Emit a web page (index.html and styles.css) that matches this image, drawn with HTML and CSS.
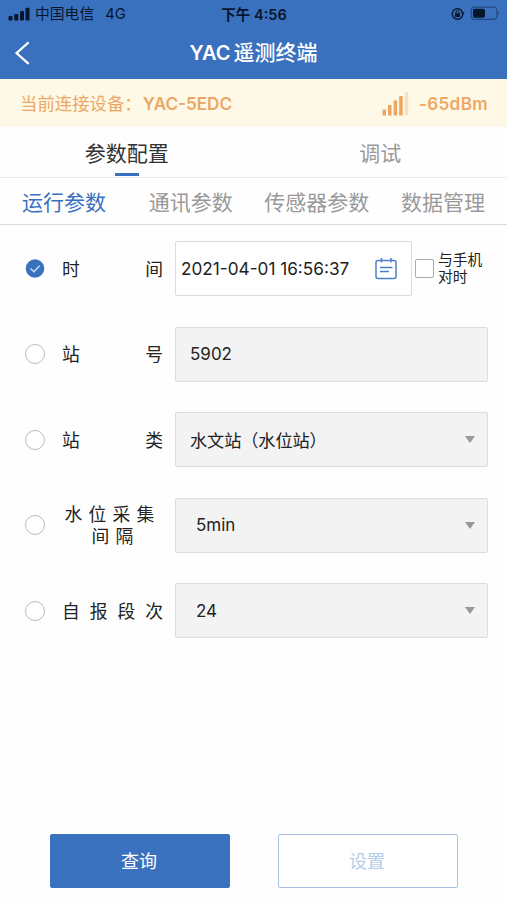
FILE: index.html
```
<!DOCTYPE html>
<html lang="zh-CN">
<head>
<meta charset="utf-8">
<title>YAC遥测终端</title>
<link rel="stylesheet" href="styles.css">
</head>
<body>
<header class="top">
  <div class="status">
    <div class="carrier">
      <svg width="22" height="14" viewBox="0 0 22 14"><rect x="0.5" y="9" width="4" height="4.5" rx="1.2"/><rect x="6.3" y="7" width="4" height="6.5" rx="1.2"/><rect x="12" y="4" width="4" height="9.5" rx="1.2"/><rect x="17.5" y="0.8" width="4" height="12.7" rx="1.2"/></svg>
      <span class="operator">中国电信</span><span class="net">4G</span>
    </div>
    <div class="clock">下午 4:56</div>
    <div class="power">
      <svg width="50" height="16" viewBox="0 0 50 16"><circle cx="7.5" cy="8" r="5.2" fill="none" stroke="#07162c" stroke-width="1.4"/><path d="M11.5 6.5h3.2l-1.7 2.6z"/><rect x="5" y="7.2" width="5" height="3.7" rx=".5"/><path d="M6 7.5V6.3a1.5 1.5 0 0 1 3 0v1.2" fill="none" stroke="#07162c"/><rect x="21.3" y="1.1" width="25.5" height="12.3" rx="3.4" fill="none" stroke="#234a80" stroke-width="1.2"/><rect x="23" y="2.8" width="12" height="9" rx="1.8"/><path d="M48 5q2 2.3 0 4.6z" fill="#234a80"/></svg>
    </div>
  </div>
  <div class="titlebar">
    <svg class="back" width="16" height="24" viewBox="0 0 16 24"><path d="M13.7 1.2L1.5 12.2l12.2 10.6" fill="none" stroke="#fff" stroke-width="2.2"/></svg>
    <h1><span class="latin">YAC</span>遥测终端</h1>
  </div>
</header>
<section class="device">
  <div class="device-name"><span class="device-label">当前连接设备：</span><b>YAC-5EDC</b></div>
  <div class="signal">
    <svg width="27" height="24" viewBox="0 0 27 24"><g fill="#eda765"><rect x="0.5" y="17.5" width="3.5" height="6"/><rect x="6" y="13" width="3.5" height="10.5"/><rect x="11.6" y="8.5" width="3.5" height="15"/><rect x="17.2" y="4" width="3.5" height="19.5"/></g><rect x="22.8" y="0.3" width="3.4" height="23.2" fill="#fae0c0"/></svg>
    <b>-65dBm</b>
  </div>
</section>
<nav class="main-tabs">
  <div class="tab active">参数配置</div>
  <div class="tab">调试</div>
</nav>
<nav class="sub-tabs">
  <span class="active">运行参数</span><span>通讯参数</span><span>传感器参数</span><span>数据管理</span>
</nav>
<main class="form">
  <div class="row">
    <svg class="radio" width="20" height="20" viewBox="0 0 20 20"><circle cx="10" cy="9.5" r="9.3" fill="#3a71be"/><path d="M5.5 9.5l3.4 3.2 5.8-6" fill="none" stroke="#c8dcf5" stroke-width="1.5"/></svg>
    <div class="label"><span>时</span><span>间</span></div>
    <div class="field date"><span>2021-04-01 16:56:37</span>
      <svg width="22" height="22" viewBox="0 0 22 22" fill="none" stroke="#4d80ca" stroke-width="1.5"><rect x="1" y="2.5" width="20" height="18" rx="2"/><path d="M6.5 0v4.5M16 0v4.5M5 9.4h12.5M5 13.6h9"/></svg>
    </div>
    <div class="check"></div>
    <div class="sync"><div>与手机</div><div>对时</div></div>
  </div>
  <div class="row">
    <div class="radio off"></div>
    <div class="label"><span>站</span><span>号</span></div>
    <div class="field gray"><span>5902</span></div>
  </div>
  <div class="row">
    <div class="radio off"></div>
    <div class="label"><span>站</span><span>类</span></div>
    <div class="field gray"><span class="cjk">水文站（水位站）</span><i class="arrow"></i></div>
  </div>
  <div class="row">
    <div class="radio off"></div>
    <div class="label two"><div>水位采集</div><div class="second">间隔</div></div>
    <div class="field gray inset"><span>5min</span><i class="arrow"></i></div>
  </div>
  <div class="row">
    <div class="radio off"></div>
    <div class="label"><span>自</span><span>报</span><span>段</span><span>次</span></div>
    <div class="field gray inset"><span>24</span><i class="arrow"></i></div>
  </div>
</main>
<footer class="actions">
  <button class="primary">查询</button>
  <button class="ghost">设置</button>
</footer>
</body>
</html>
```
FILE: styles.css
```
* { box-sizing: border-box; }
body {
  margin: 0;
  height: 900px;
  display: flex;
  flex-direction: column;
  background: #fefefe;
  color: #222;
  font-family: Inter, "Noto Sans CJK SC", sans-serif;
  overflow: hidden;
}
svg { display: block; flex: none; }
.top { height: 79px; background: #3a71be; flex: none; }
.status {
  height: 27px;
  display: grid;
  grid-template-columns: 1fr auto 1fr;
  align-items: center;
  padding: 0 7px 0 8px;
  color: #07162c;
  fill: #07162c;
  font-size: 14.8px;
  line-height: 27px;
}
.carrier { display: flex; align-items: center; }
.operator { margin-left: 5px; padding-top: 1px; }
.net { margin-left: 11px; padding-top: 1px; }
.clock { font-weight: 600; font-size: 14.5px; }
.power { justify-self: end; }
.titlebar {
  height: 52px;
  display: grid;
  grid-template-columns: 1fr auto 1fr;
  align-items: center;
  color: #fff;
}
.back { margin-left: 15px; }
h1 { margin: 0; font-size: 21px; line-height: 50px; font-weight: 500; }
h1 .latin { font-weight: 600; font-size: 20px; margin-right: 3px; }
.device {
  height: 48px;
  flex: none;
  display: flex;
  align-items: center;
  justify-content: space-between;
  padding: 1px 19px 0 21px;
  background: #fef9e6;
  color: #eda765;
  font-size: 17.4px;
  line-height: 48px;
}
.device b { font-weight: 600; font-size: 17.1px; }
.device-name { display: flex; }
.device-label { margin-left: -1px; margin-right: 1px; }
.signal { display: flex; align-items: center; gap: 10px; }
.signal b { letter-spacing: 0.35px; }
.main-tabs {
  height: 51px;
  flex: none;
  display: grid;
  grid-template-columns: 1fr 1fr;
  border-bottom: 1px solid #e9ebee;
  font-size: 21px;
  line-height: 53px;
  text-align: center;
}
.tab { color: #999; position: relative; height: 50px; }
.tab.active { color: #333; }
.tab.active::after {
  content: "";
  position: absolute;
  left: 115px;
  bottom: 1px;
  width: 24px;
  height: 3px;
  background: #3a71be;
}
.sub-tabs {
  height: 47px;
  flex: none;
  display: flex;
  justify-content: space-between;
  padding: 0 22px 0 22px;
  border-bottom: 1px solid #d8d8d8;
  font-size: 21px;
  line-height: 49px;
  color: #999;
}
.sub-tabs span:first-child { margin-right: 11px; }
.sub-tabs .active { color: #3a71be; }
.form { padding: 16px 19px 0 25px; display: flex; flex-direction: column; gap: 30.5px; }
.row { height: 55px; display: flex; align-items: center; }
.radio { flex: none; width: 20px; height: 20px; }
.radio.off { border: 1px solid #bbb; border-radius: 50%; background: #fff; }
.label {
  width: 101px;
  margin: 0 12px 0 17px;
  padding-top: 2px;
  flex: none;
  display: flex;
  justify-content: space-between;
  font-size: 17.8px;
  line-height: 26px;
}
.label.two {
  display: block;
  text-align: center;
  letter-spacing: 6.2px;
  line-height: 22px;
  white-space: nowrap;
}
.label .second { padding-left: 6px; }
.field {
  flex: 1;
  height: 55px;
  display: flex;
  align-items: center;
  justify-content: space-between;
  border: 1px solid #dcdcdc;
  border-radius: 2px;
  background: #fff;
  padding: 0 12px 0 14px;
  font-size: 17px;
}
.field .cjk { font-size: 17.2px; letter-spacing: -0.1px; }
.field.date { flex: none; width: 237px; padding: 0 14px 0 5px; font-size: 17.2px; white-space: nowrap; }
.gray { background: #f3f3f3; }
.inset { padding-left: 20px; }
.arrow {
  width: 0;
  height: 0;
  border-left: 5.5px solid transparent;
  border-right: 5.5px solid transparent;
  border-top: 7px solid #999;
}
.check { flex: none; width: 19px; height: 19px; margin-left: 3px; border: 1px solid #aaa; border-radius: 2px; background: #fff; }
.sync { margin-left: 4px; font-size: 14.8px; line-height: 17px; white-space: nowrap; }
.actions {
  margin-top: auto;
  padding: 0 49px 12px 50px;
  display: flex;
  justify-content: space-between;
}
button {
  width: 180px;
  height: 54px;
  padding: 2px 2px 0 0;
  border: 1px solid #3a71be;
  border-radius: 2px;
  font: 18px/50px Inter, "Noto Sans CJK SC", sans-serif;
}
.primary { background: #3a71be; color: #fff; }
.ghost { background: #fff; color: #b5cdeb; border-color: #a6c1e4; }
```
